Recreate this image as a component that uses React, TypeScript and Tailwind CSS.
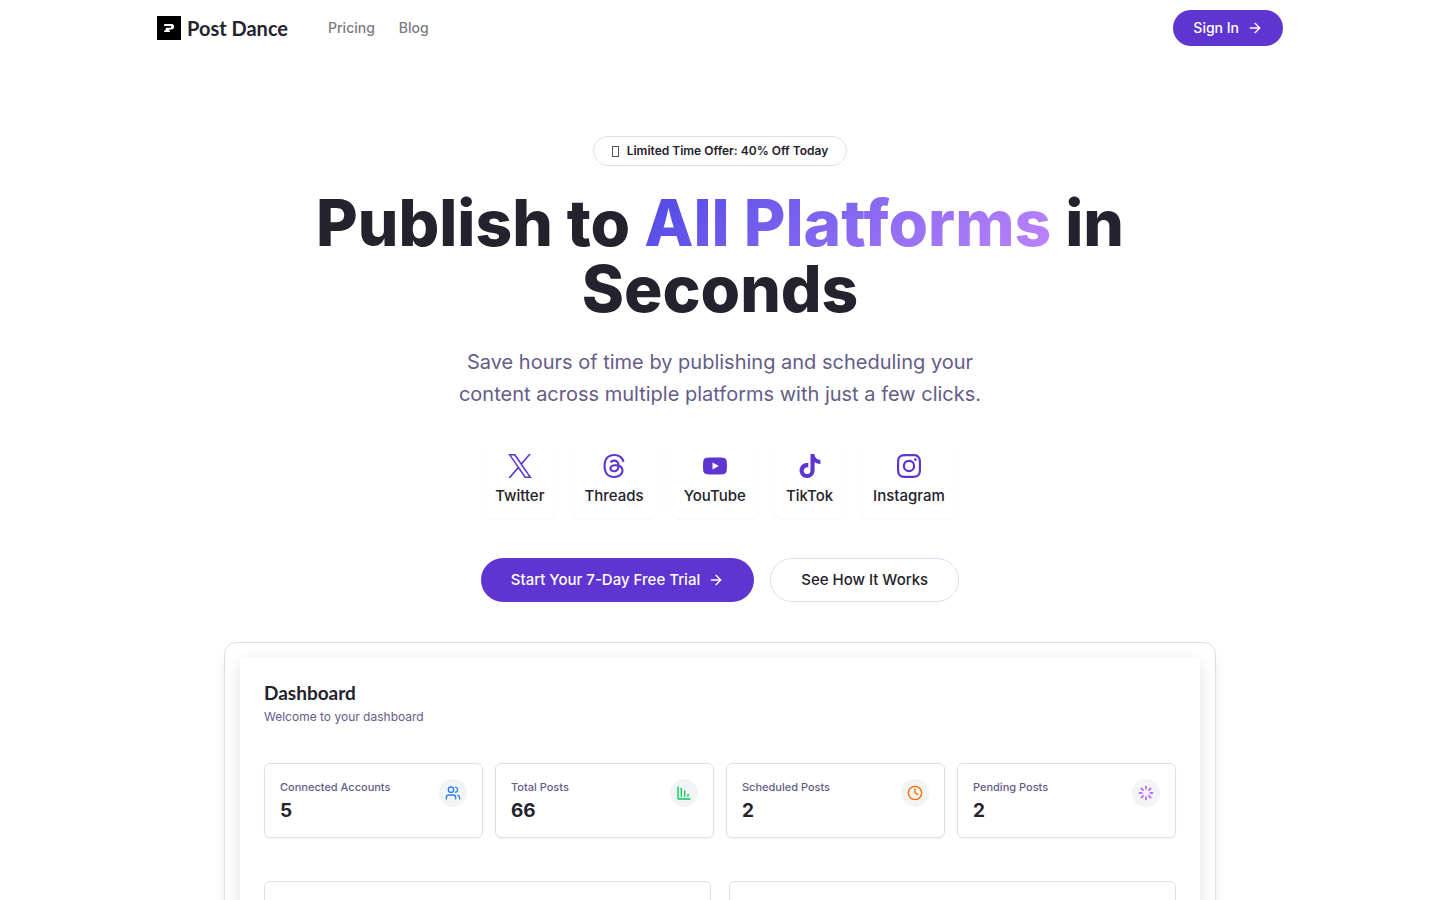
import { ArrowRight, Clock, Loader, Users } from "lucide-react";
import type { ReactNode } from "react";
import { SiInstagram, SiThreads, SiTiktok, SiYoutube } from "react-icons/si";

function XIcon({ className }: { className?: string }) {
  return (
    <svg viewBox="0 0 24 24" fill="currentColor" className={className} aria-hidden="true">
      <path d="M14.234 10.162 22.977 0h-2.072l-7.591 8.824L7.251 0H.258l9.168 13.343L.258 24H2.33l8.016-9.318L16.749 24h6.993zm-2.837 3.299-.929-1.329L3.076 1.56h3.182l5.965 8.532.929 1.329 7.754 11.090h-3.182z" />
    </svg>
  );
}

function BarsIcon() {
  return (
    <svg
      viewBox="0 0 24 24"
      className="size-4 text-green-500"
      fill="none"
      stroke="currentColor"
      strokeWidth="2"
      strokeLinecap="round"
      strokeLinejoin="round"
      aria-hidden="true"
    >
      <path d="M3 3v17a1 1 0 0 0 1 1h17" />
      <path d="M8 5v12" />
      <path d="M13 9v8" />
      <path d="M18 14v3" />
    </svg>
  );
}

const platforms = [
  { name: "Twitter", icon: XIcon },
  { name: "Threads", icon: SiThreads },
  { name: "YouTube", icon: SiYoutube },
  { name: "TikTok", icon: SiTiktok },
  { name: "Instagram", icon: SiInstagram },
];

const stats = [
  { label: "Connected Accounts", value: 5, icon: <Users className="size-4 text-blue-500" /> },
  { label: "Total Posts", value: 66, icon: <BarsIcon /> },
  { label: "Scheduled Posts", value: 2, icon: <Clock className="size-4 text-orange-500" /> },
  { label: "Pending Posts", value: 2, icon: <Loader className="size-4 text-purple-500" /> },
];

function Logo() {
  return (
    <a href="#" className="flex items-center gap-1.5">
      <svg viewBox="0 0 24 24" className="size-6" aria-hidden="true">
        <rect width="24" height="24" fill="#000" />
        <path
          fill="#fff"
          d="M7.300 8h8.200l1.500 1.300v2.700l-1.800 1.600h-3l-.4.900h1.200V16H7l.3-1.500h.9l1-2.800h4.600l.4-1.700H7z"
        />
      </svg>
      <span className="font-[Lato,sans-serif] text-xl font-bold">Post Dance</span>
    </a>
  );
}

function Header() {
  return (
    <header className="mx-auto flex h-14 w-full max-w-6xl items-center justify-between px-[13px]">
      <div className="flex items-center gap-10">
        <Logo />
        <nav className="flex gap-6 text-sm font-medium text-[#7b7b80]">
          <a href="#pricing">Pricing</a>
          <a href="#blog">Blog</a>
        </nav>
      </div>
      <button className="flex h-9 items-center gap-2 rounded-full bg-[#5f35d2] px-5 text-sm font-medium text-white">
        Sign In
        <ArrowRight className="size-4" />
      </button>
    </header>
  );
}

function StatCard({ label, value, icon }: { label: string; value: number; icon: ReactNode }) {
  return (
    <div className="flex h-[75px] items-start justify-between rounded-md border border-[#e0e0e4] p-[15px] shadow-xs">
      <div>
        <div className="text-[11px] leading-4 font-medium text-[#655c88]">{label}</div>
        <div className="mt-1 text-[19px] leading-6 font-bold">{value}</div>
      </div>
      <div className="flex size-7 items-center justify-center rounded-full bg-gray-100">{icon}</div>
    </div>
  );
}

function DashboardPreview() {
  return (
    <div className="mx-auto mt-10 w-full max-w-[992px] rounded-xl border border-[#e0ddee] p-[15px] shadow-lg">
      <div className="bg-white px-6 pt-[23px] pb-6 shadow-[0_4px_15px_rgba(0,0,0,0.12)]">
        <h2 className="font-[Lato,sans-serif] text-[19px] leading-6 font-bold">Dashboard</h2>
        <p className="text-xs leading-6 text-[#655c88]">Welcome to your dashboard</p>
        <div className="mt-[34px] grid grid-cols-4 gap-3">
          {stats.map((stat) => (
            <StatCard key={stat.label} {...stat} />
          ))}
        </div>
        <div className="mt-[43px] grid grid-cols-2 gap-[18px]">
          <div className="h-64 rounded-md border border-[#e0e0e4]" />
          <div className="h-64 rounded-md border border-[#e0e0e4]" />
        </div>
      </div>
    </div>
  );
}

function Hero() {
  return (
    <main className="flex flex-col items-center px-6 pt-20">
      <div className="flex h-[30px] items-center gap-2 rounded-full border border-[#e0ddee] px-[18px] text-xs font-semibold">
        <span className="h-[11px] w-[7px] border border-[#55535c]" />
        <span>Limited Time Offer: 40% Off Today</span>
      </div>
      <h1 className="mt-6 max-w-[896px] text-center text-[64px] leading-[66px] font-extrabold">
        Publish to{" "}
        <span className="bg-linear-135 from-[#4f46e5] to-[#c084fc] bg-clip-text text-transparent">
          All Platforms
        </span>{" "}
        in Seconds
      </h1>
      <p className="mt-6 max-w-[576px] text-center text-xl leading-8 text-[#655c88]">
        Save hours of time by publishing and scheduling your content across multiple platforms with
        just a few clicks.
      </p>
      <ul className="mt-8 flex gap-4">
        {platforms.map(({ name, icon: Icon }) => (
          <li
            key={name}
            className="flex flex-col items-center gap-2 rounded-lg p-3 text-[15px] leading-5 font-medium shadow-[0_1px_2px_rgba(0,0,0,0.05)]"
          >
            <Icon className="size-6 text-[#5f35d2]" />
            {name}
          </li>
        ))}
      </ul>
      <div className="mt-10 flex gap-4 text-[15px] leading-5 font-medium">
        <button className="flex h-11 items-center gap-2 rounded-full bg-[#5f35d2] px-[30px] text-white">
          Start Your 7-Day Free Trial
          <ArrowRight className="size-4" />
        </button>
        <button className="h-11 rounded-full border border-[#e0ddee] px-[30px]">
          See How It Works
        </button>
      </div>
      <DashboardPreview />
    </main>
  );
}

export default function App() {
  return (
    <div className="min-h-screen bg-white font-[Inter,sans-serif] text-[#24222c]">
      <Header />
      <Hero />
    </div>
  );
}
